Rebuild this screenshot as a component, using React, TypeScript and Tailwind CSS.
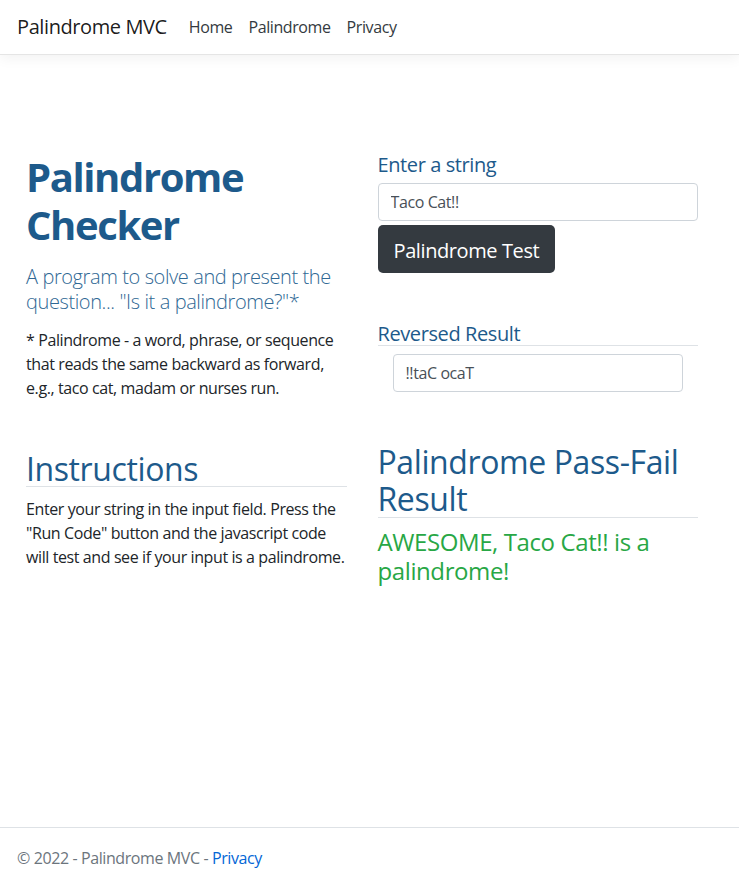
export default function App() {
    const font = { fontFamily: '"Open Sans", "Noto Sans", sans-serif' };

    return (
        <div className="flex min-h-screen flex-col bg-white tracking-[-0.025em]" style={font}>
            {/* Navbar */}
            <nav className="flex h-[55px] items-center border-b border-[#e5e5e5] bg-white pl-[17px] shadow-[0_4px_12px_rgba(0,0,0,0.05)]">
                <span className="mr-[14px] text-[20px] text-black/90">Palindrome MVC</span>
                <a className="px-2 text-[16px] text-[#343a40]" href="#">Home</a>
                <a className="px-2 text-[16px] text-[#343a40]" href="#">Palindrome</a>
                <a className="px-2 text-[16px] text-[#343a40]" href="#">Privacy</a>
            </nav>

            {/* Main */}
            <main className="flex-1 pl-[26px] pr-[41px]">
                <div className="grid grid-cols-2 gap-[31px]">
                    {/* Left column */}
                    <div className="flex flex-col pt-[98px]">
                        <h1 className="text-[40px] font-bold leading-[1.2] tracking-[-0.035em] text-[#1d5a8b]">
                            Palindrome Checker
                        </h1>
                        <p className="mt-[15px] text-[20px] font-light leading-[25px] text-[#2f6894]">
                            A program to solve and present the question... "Is it a palindrome?"*
                        </p>
                        <p className="mt-[14px] text-[16px] leading-6 text-[#212529]">
                            * Palindrome - a word, phrase, or sequence that reads the same backward as forward, e.g., taco cat, madam or nurses run.
                        </p>
                        <h2 className="mt-[46px] border-b border-[#dee2e6] pt-[5px] text-[32px] font-normal leading-[35px] text-[#1d5a8b]">
                            Instructions
                        </h2>
                        <p className="mt-[10px] text-[16px] leading-6 text-[#212529]">
                            Enter your string in the input field. Press the "Run Code" button and the javascript code will test and see if your input is a palindrome.
                        </p>
                    </div>

                    {/* Right column */}
                    <div className="flex flex-col pt-[98px]">
                        <label className="text-[20px] leading-[24px] text-[#1d5a8b]">Enter a string</label>
                        <input
                            className="mt-[6px] h-[38px] w-full rounded-[4px] border border-[#ced4da] px-3 text-[16px] text-[#495057] outline-none"
                            defaultValue="Taco Cat!!"
                        />
                        <div className="mt-[4px]">
                            <button className="h-[48px] rounded-[5px] bg-[#343a40] px-4 pt-[3px] text-[20px] text-white">
                                Palindrome Test
                            </button>
                        </div>

                        <h4 className="mt-[50px] border-b border-[#dee2e6] text-[20px] leading-[22px] text-[#1d5a8b]">
                            Reversed Result
                        </h4>
                        <div className="mt-[8px] px-[15px]">
                            <input
                                className="h-[38px] w-full rounded-[4px] border border-[#ced4da] px-3 text-[16px] text-[#495057] outline-none"
                                defaultValue="!!taC ocaT"
                                readOnly
                            />
                        </div>

                        <h2 className="mt-[51px] border-b border-[#dee2e6] text-[32px] font-normal leading-[37px] text-[#1d5a8b]">
                            Palindrome Pass-Fail Result
                        </h2>
                        <p className="mt-[10px] text-[24px] leading-[1.2] text-[#28a745]">
                            AWESOME, Taco Cat!! is a palindrome!
                        </p>
                    </div>
                </div>
            </main>

            {/* Footer */}
            <footer className="h-[55px] overflow-hidden border-t border-[#dee2e6] pl-[17px] text-[16px] leading-[60px] text-[#6c757d]">
                © 2022 - Palindrome MVC - <a className="text-[#0366d6]" href="#">Privacy</a>
            </footer>
        </div>
    );
}
